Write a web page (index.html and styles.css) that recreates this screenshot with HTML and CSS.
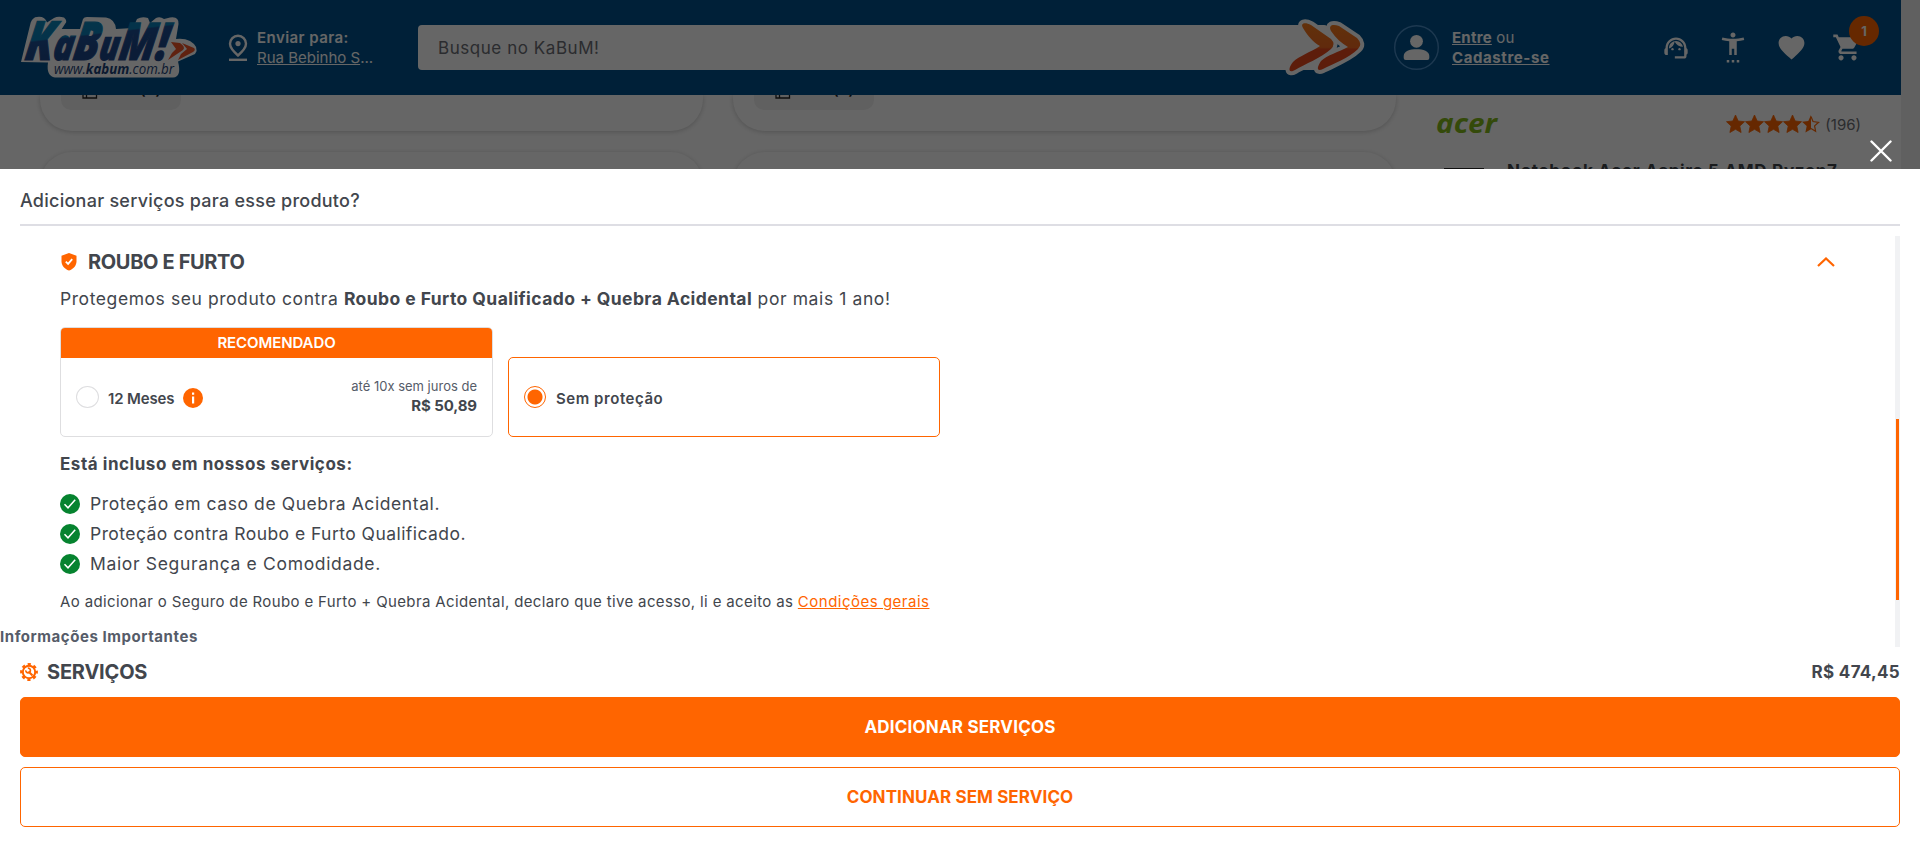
FILE: index.html
```html
<!DOCTYPE html>
<html lang="pt-BR">
<head>
<meta charset="utf-8">
<title>KaBuM! - Serviços</title>
<link rel="stylesheet" href="styles.css">
</head>
<body>
<div class="page">
  <header class="header">
    <svg class="logo" viewBox="0 0 180 64" width="180" height="64">
      <defs>
        <linearGradient id="brand" gradientUnits="userSpaceOnUse" x1="0" y1="-42" x2="4" y2="0">
          <stop offset="0" stop-color="#0b86b8"/><stop offset=".56" stop-color="#0b80b8"/>
          <stop offset=".6" stop-color="#1c4f95"/><stop offset="1" stop-color="#1c4789"/>
        </linearGradient>
      </defs>
      <path d="M1 47L10.700 7.500Q13 2 17 2Q25 1 27 7.500L34 3Q38 1 44 2.500Q48 6 45 9L41.700 14L60 14L63 4Q64 2 67 2L86 2.500Q95 4 96 14L113 13L117 4Q122 1 128 3L130 8L136 3Q140 1 144 4L150 2.500Q159 1 158.500 9L156 24Q164 23 170 26Q180 32 175 39L158 46.500Q162 62 153 62.500L35 62.500Q26 61 28 47.500Z" fill="#fff"/>
      <text class="logo-word" transform="translate(4 44.500) skewX(-9) scale(.8 1)" x="0" y="0" fill="url(#brand)" stroke="url(#brand)" stroke-width="1.200" textLength="178" lengthAdjust="spacingAndGlyphs"><tspan font-size="54">K</tspan><tspan font-size="43">a</tspan><tspan font-size="53">B</tspan><tspan font-size="41">u</tspan><tspan font-size="52">M!</tspan></text>
      <path d="M151 27L160 28Q166 32 163 35L148 45L152 38L156 34Z M162 28L174 33Q176 35 173 37L158 45L161 39L167 34Z" fill="#f0562a"/>
      <text class="logo-url" x="34" y="58.500" font-size="14.500" textLength="120" lengthAdjust="spacingAndGlyphs">www.<tspan font-weight="700">kabum</tspan>.com.br</text>
    </svg>
    <div class="address">
      <svg width="20" height="28" viewBox="0 0 20 28" fill="none" stroke="#fff" stroke-width="2.4">
        <path d="M10 21.5C6 18 2 14 2 9.800a8 8 0 0 1 16 0c0 4.200-4 8.200-8 11.700z"/>
        <circle cx="10" cy="9.600" r="2.600" fill="#fff" stroke="none"/><path d="M1 25.800h18"/>
      </svg>
      <div class="address-text"><b class="t-env">Enviar para:</b><span class="t-rua"><u>Rua Bebinho S</u>...</span></div>
    </div>
    <div class="search">
      <span class="t-busque">Busque no KaBuM!</span>
      <svg class="search-go" width="84" height="62" viewBox="0 0 84 62">
        <defs><linearGradient id="fire" x1="0" y1="0" x2="0" y2="1"><stop offset="0" stop-color="#f47a1c"/><stop offset=".5" stop-color="#f26a20"/><stop offset=".54" stop-color="#e8491c"/><stop offset="1" stop-color="#e8491c"/></linearGradient></defs>
        <g fill="#fff" stroke="#fff" stroke-width="8" stroke-linejoin="round">
          <path d="M20 10C17 5 22 4 28 7L48 21Q53 26 48 31C38 40 22 46 12 52C5 56 5 50 10 44C16 38 28 34 37 28C30 24 25 18 20 10Z"/>
          <path d="M48 13C45 7 50 6 56 8L74 20Q80 26 75 31C66 40 50 46 40 51C33 54 34 49 38 43C44 37 56 34 65 29C58 25 53 20 48 13Z"/>
        </g>
        <g fill="url(#fire)">
          <path d="M20 10C17 5 22 4 28 7L48 21Q53 26 48 31C38 40 22 46 12 52C5 56 5 50 10 44C16 38 28 34 37 28C30 24 25 18 20 10Z"/>
          <path d="M48 13C45 7 50 6 56 8L74 20Q80 26 75 31C66 40 50 46 40 51C33 54 34 49 38 43C44 37 56 34 65 29C58 25 53 20 48 13Z"/>
        </g>
      </svg>
    </div>
    <div class="account">
      <svg width="45" height="45" viewBox="0 0 45 45"><circle cx="22.500" cy="22.500" r="21.800" fill="none" stroke="#4a8dc8" stroke-width="1.400"/><circle cx="22.500" cy="16.300" r="6.400" fill="#fff"/><path d="M9.700 33v-2c0-5 6-6.800 12.800-6.800s12.800 1.800 12.800 6.800v2q0 2-2 2H11.700q-2 0-2-2z" fill="#fff"/></svg>
      <div class="account-text"><span class="t-entre"><b><u>Entre</u></b> ou</span><b class="t-cad"><u>Cadastre-se</u></b></div>
    </div>
    <nav class="tools">
      <svg width="28" height="28" viewBox="0 0 24 24" fill="#fff"><path d="M21 12.220C21 6.730 16.740 3 12 3c-4.690 0-9 3.650-9 9.280-.6.340-1 .98-1 1.720v2c0 1.100.9 2 2 2h1v-6.100c0-3.870 3.130-7 7-7s7 3.130 7 7V19h-8v2h8c1.100 0 2-.9 2-2v-1.220c.59-.31 1-.92 1-1.640v-2.300c0-.7-.41-1.310-1-1.620z"/><circle cx="9" cy="13" r="1"/><circle cx="15" cy="13" r="1"/><path d="M18 11.030A6.040 6.040 0 0 0 12.050 6c-3.030 0-6.290 2.510-6.030 6.450a8.075 8.075 0 0 0 4.860-5.890c1.310 2.630 4 4.440 7.120 4.470z"/></svg>
      <svg width="30" height="31" viewBox="0 0 24 24" fill="#fff"><path d="M20.500 4c-2.610.7-5.670 1-8.500 1s-5.890-.3-8.500-1L3 6c1.860.5 4 .83 6 1v11h2v-5h2v5h2V7c2-.17 4.140-.5 6-1l-.5-2zM12 4c1.100 0 2-.9 2-2s-.9-2-2-2-2 .9-2 2 .9 2 2 2zM7 24h2v-2H7v2zm4 0h2v-2h-2v2zm4 0h2v-2h-2v2z"/></svg>
      <svg width="31" height="31" viewBox="0 0 24 24" fill="#fff"><path d="M12 21.350l-1.450-1.320C5.400 15.360 2 12.280 2 8.500 2 5.420 4.420 3 7.500 3c1.740 0 3.410.81 4.500 2.090C13.090 3.810 14.760 3 16.500 3 19.580 3 22 5.420 22 8.500c0 3.780-3.400 6.860-8.550 11.540L12 21.350z"/></svg>
      <div class="cart">
        <svg width="31" height="31" viewBox="0 0 24 24" fill="#fff"><path d="M7 18c-1.100 0-1.990.9-1.990 2S5.900 22 7 22s2-.9 2-2-.9-2-2-2zM1 2v2h2l3.600 7.590-1.350 2.450c-.16.280-.25.610-.25.960 0 1.100.9 2 2 2h12v-2H7.420c-.14 0-.25-.11-.25-.25l.03-.12.900-1.630h7.450c.75 0 1.410-.41 1.750-1.030l3.580-6.490A1 1 0 0 0 20 4H5.210l-.94-2H1zm16 16c-1.100 0-1.990.9-1.990 2s.89 2 1.990 2 2-.9 2-2-.9-2-2-2z"/></svg>
        <span class="badge">1</span>
      </div>
    </nav>
  </header>
  <main class="content">
    <section class="reviews">
      <article class="review review-end"><div class="useful"><svg width="16" height="16" viewBox="0 0 16 16" fill="none" stroke="#222" stroke-width="1.300"><path d="M1 7h3.500v8H1zM4.500 8l3-6c2 0 2.500 1 2 4h5v9h-11"/></svg><span class="count">(0)</span></div></article>
      <article class="review review-end"><div class="useful"><svg width="16" height="16" viewBox="0 0 16 16" fill="none" stroke="#222" stroke-width="1.300"><path d="M1 7h3.500v8H1zM4.500 8l3-6c2 0 2.500 1 2 4h5v9h-11"/></svg><span class="count">(0)</span></div></article>
      <article class="review"></article>
      <article class="review"></article>
    </section>
    <aside class="product">
      <div class="product-top">
        <svg class="acer-logo" width="64" height="20" viewBox="0 0 64 20"><text class="acer" x="0" y="17.500" textLength="61" lengthAdjust="spacingAndGlyphs">acer</text></svg>
        <div class="rating">
          <svg width="95" height="19" viewBox="0 0 95 19" fill="#ff6500"><defs><path id="star" d="M9.500 0l2.700 6 6.300.7-4.700 4.400 1.300 6.400-5.600-3.200-5.600 3.200 1.300-6.400L.5 6.700 6.800 6z" stroke="#ff6500" stroke-width=".8" stroke-linejoin="round"/></defs><use href="#star"/><use href="#star" x="19"/><use href="#star" x="38"/><use href="#star" x="57"/><path transform="translate(75.500)" d="M9.500 0v14.300l-5.600 3.200 1.300-6.400L.5 6.700 6.800 6z"/><path transform="translate(75.500)" d="M9.500 1.500l2 5 5.600.8-4 3.600 1 5.300-4.600-2.700" fill="none" stroke="#ff6500" stroke-width="1.200"/></svg>
          <span class="t-196">(196)</span>
        </div>
      </div>
      <div class="product-name"><span class="thumb"></span><b class="t-note">Notebook Acer Aspire 5 AMD Ryzen7-</b></div>
    </aside>
  </main>
</div>
<div class="overlay">
  <svg class="close" width="22" height="22" viewBox="0 0 22 22" stroke="#fff" stroke-width="2.400" stroke-linecap="round"><path d="M1.500 1.500l19 19M20.500 1.500l-19 19"/></svg>
</div>
<div class="modal" role="dialog">
  <h1 class="modal-title"><span class="t-add">Adicionar serviços para esse produto?</span></h1>
  <div class="scroll-area">
    <div class="scroll-content">
      <section class="service">
        <div class="service-head">
          <svg width="16" height="18" viewBox="0 0 16 18"><path d="M8 0l7.500 2.700v5.500c0 4.200-3 7.800-7.500 9.300C3.500 16 .5 12.400.5 8.200V2.700z" fill="#ff6500"/><path d="M4.800 8.600l2.300 2.300 4.100-4.700" fill="none" stroke="#fff" stroke-width="1.800"/></svg>
          <h2 class="t-roubo">ROUBO E FURTO</h2>
          <svg class="chevron" width="18" height="10" viewBox="0 0 18 10" fill="none" stroke="#ff6500" stroke-width="2.200"><path d="M1 9l8-7.500L17 9"/></svg>
        </div>
        <p class="lead"><span class="t-prot">Protegemos seu produto contra </span><b class="t-qual">Roubo e Furto Qualificado + Quebra Acidental</b><span class="t-mais"> por mais 1 ano!</span></p>
        <div class="plans">
          <div class="plan">
            <div class="plan-flag"><span class="t-reco">RECOMENDADO</span></div>
            <div class="plan-body">
              <i class="radio"></i><b class="t-12">12 Meses</b>
              <svg class="info" width="20" height="20" viewBox="0 0 20 20"><circle cx="10" cy="10" r="10" fill="#ff6500"/><path d="M9 8.500h2.200v7H9zM9 4.500h2.200v2.200H9z" fill="#fff"/></svg>
              <div class="price"><span class="t-ate">até 10x sem juros de</span><b class="t-50">R$ 50,89</b></div>
            </div>
          </div>
          <div class="plan plan-selected">
            <div class="plan-body"><i class="radio radio-on"></i><b class="t-sem">Sem proteção</b></div>
          </div>
        </div>
        <h3 class="included"><span class="t-esta">Está incluso em nossos serviços:</span></h3>
        <ul class="checks">
          <li><svg width="20" height="20" viewBox="0 0 20 20"><circle cx="10" cy="10" r="10" fill="#06832f"/><path d="M4.500 10.200l3.500 3.600 7.200-8" fill="none" stroke="#fff" stroke-width="1.500"/></svg><span class="t-c1">Proteção em caso de Quebra Acidental.</span></li>
          <li><svg width="20" height="20" viewBox="0 0 20 20"><circle cx="10" cy="10" r="10" fill="#06832f"/><path d="M4.500 10.200l3.500 3.600 7.200-8" fill="none" stroke="#fff" stroke-width="1.500"/></svg><span class="t-c2">Proteção contra Roubo e Furto Qualificado.</span></li>
          <li><svg width="20" height="20" viewBox="0 0 20 20"><circle cx="10" cy="10" r="10" fill="#06832f"/><path d="M4.500 10.200l3.500 3.600 7.200-8" fill="none" stroke="#fff" stroke-width="1.500"/></svg><span class="t-c3">Maior Segurança e Comodidade.</span></li>
        </ul>
        <p class="terms"><span class="t-ao">Ao adicionar o Seguro de Roubo e Furto + Quebra Acidental, declaro que tive acesso, li e aceito as </span><u class="t-cond">Condições gerais</u></p>
      </section>
      <h4 class="important"><span class="t-info">Informações Importantes</span></h4>
    </div>
    <div class="track"><div class="track-thumb"></div></div>
  </div>
  <footer class="modal-foot">
    <div class="total">
      <svg width="18" height="18" viewBox="0 0 18 18" fill="none" stroke="#ff6500"><circle cx="9" cy="9" r="6.200" stroke-width="2"/><circle cx="9" cy="9" r="7.700" stroke-width="2.400" stroke-dasharray="3.200 2.847" stroke-dashoffset="1.600"/><path d="M8.500 8.500l4 4" stroke-width="2.200"/><path d="M5.800 7.400a2.300 2.300 0 1 0 2-2.200" stroke-width="1.700"/></svg>
      <h2 class="t-serv">SERVIÇOS</h2><b class="t-474">R$ 474,45</b>
    </div>
    <button class="btn btn-full"><span class="t-adic">ADICIONAR SERVIÇOS</span></button>
    <button class="btn"><span class="t-cont">CONTINUAR SEM SERVIÇO</span></button>
  </footer>
</div>
</body>
</html>
```
FILE: styles.css
```css
* { box-sizing: border-box; margin: 0; padding: 0; }
body { font-family: Inter, "Liberation Sans", sans-serif; color: #42464d; background: #f0f0f0; height: 847px; overflow: hidden; }
span, b, u { white-space: nowrap; }
b { font-weight: 600; }
.page { width: 1901px; height: 847px; overflow: hidden; background: #fff; }

.header { display: flex; align-items: center; height: 95px; background: #00528c; color: #fff; position: relative; }
.logo { margin-left: 20px; margin-top: -1px; overflow: visible; }
.logo-word { font-family: "Open Sans", sans-serif; font-style: italic; font-weight: 800; }
.logo-url { font-family: "Open Sans", sans-serif; font-style: italic; fill: #1c4378; }
.address { display: flex; gap: 9px; align-items: center; width: 160px; margin-left: 28px; font-size: 15px; }
.address-text, .account-text { display: flex; flex-direction: column; line-height: 20px; }
.search { display: flex; align-items: center; width: 910px; height: 45px; margin-left: 30px; padding-left: 20px; background: #fff; border-radius: 4px; color: #6b6e75; font-size: 17px; position: relative; }
.search-go { position: absolute; left: 865px; top: -7px; }
.account { display: flex; align-items: center; gap: 13px; margin-left: 66px; width: 230px; font-size: 15px; }
.account b { font-weight: 700; }
.tools { display: flex; align-items: center; margin-left: 38px; gap: 28px; }
.cart { position: relative; height: 31px; margin-left: -3px; }
.badge { position: absolute; left: 17px; top: -16px; width: 30px; height: 30px; border-radius: 50%; background: #ff6500; font-size: 13px; font-weight: 700; line-height: 30px; text-align: center; }

.content { display: flex; }
.reviews { display: grid; grid-template-columns: 663px 663px; gap: 21px 30px; margin-left: 40px; }
.review { height: 100px; border-radius: 32px; box-shadow: 0 1px 5px rgba(0, 0, 0, .2); }
.review-end { height: 36px; border-radius: 0 0 32px 32px; padding-left: 21px; }
.useful { display: flex; align-items: flex-end; gap: 42px; width: 120px; height: 15px; padding: 0 0 11px 21px; background: #f0f0f0; border-radius: 0 0 10px 10px; font-size: 15px; line-height: 19px; color: #222; overflow: hidden; }
.count { font-weight: 600; line-height: 18px; }
.product { width: 425px; margin-left: 40px; padding-top: 20px; }
.product-top { display: flex; justify-content: space-between; align-items: flex-start; height: 46px; }
.acer-logo { overflow: visible; }
.acer { font-family: "Open Sans", sans-serif; font-size: 27px; font-style: italic; font-weight: 700; fill: #83b81a; }
.rating { display: flex; gap: 4px; align-items: center; color: #6b6e75; font-size: 15px; }
.rating svg { margin-left: -1px; }
.product-name { display: flex; font-size: 17px; line-height: 20px; }
.thumb { width: 40px; height: 20px; margin: 7px 23px 0 8px; background: #2a2a2a; }

.overlay { position: absolute; inset: 0; background: rgba(0, 0, 0, .6); }
.close { position: absolute; left: 1870px; top: 140px; }

.modal { position: absolute; left: 0; top: 169px; width: 1920px; height: 678px; background: #fff; overflow: hidden; }
.modal-title { height: 57px; margin: 0 20px; padding-top: 20px; border-bottom: 2px solid #dedee4; font-size: 18px; font-weight: 550; line-height: 24px; }
.scroll-area { display: flex; margin-top: 10px; height: 411px; }
.scroll-content { width: 1895px; }
.track { width: 5px; background: #f1f2f4; padding: 183px 1px 0; }
.track-thumb { height: 181px; background: #ff6500; }
.service { padding: 14px 60px 0; }
.service-head { display: flex; align-items: center; height: 24px; }
.service-head svg { margin-left: 1px; }
h2 { font-size: 20px; font-weight: 700; }
.service-head h2 { margin-left: 11px; }
.service-head .chevron { margin-left: auto; }
.lead { margin-top: 13px; height: 24px; line-height: 24px; font-size: 17.5px; }
.lead span, .lead b { white-space: pre; }
.lead b { font-weight: 700; }
.plans { display: flex; gap: 15px; align-items: flex-end; margin-top: 16px; height: 110px; }
.plan { width: 433px; border: 1px solid #dedee0; border-radius: 5px; overflow: hidden; }
.plan-selected { width: 432px; border-color: #ff6500; }
.plan-flag { height: 30px; background: #ff6500; color: #fff; font-size: 15px; font-weight: 600; line-height: 30px; text-align: center; }
.plan-body { display: flex; align-items: center; height: 78px; padding: 0 15px; font-size: 15px; }
.plan-body > b { padding-top: 2px; }
.radio { width: 23px; height: 22px; border: 1px solid #dedee0; border-radius: 50%; margin-right: 9px; }
.radio-on { width: 22px; margin-right: 10px; border-color: #ff6500; background: radial-gradient(circle, #ff6500 7px, #fff 8px); }
.info { margin-left: 9px; margin-top: 2px; }
.price { display: flex; flex-direction: column; align-items: flex-end; margin-left: auto; margin-top: -2px; font-size: 13px; line-height: 19px; color: #565c69; }
.price b { font-size: 15px; color: #42464d; font-weight: 700; }
.included { margin-top: 15px; font-size: 17px; line-height: 24px; font-weight: 700; }
.checks { list-style: none; margin-top: 13px; }
.checks li { display: flex; align-items: center; gap: 10px; height: 30px; font-size: 17.5px; }
.checks span { margin-top: -1px; }
.terms { margin-top: 13px; font-size: 15px; line-height: 20px; }
.terms span { white-space: pre; }
.terms u { color: #ff6500; }
.important { margin-top: 15px; font-size: 15px; line-height: 20px; font-weight: 700; color: #565c69; }
.modal-foot { padding: 0 20px; }
.total { display: flex; align-items: center; height: 50px; gap: 9px; }
.total b { margin-left: auto; font-size: 17px; font-weight: 700; }
.btn { display: block; width: 100%; height: 60px; margin-bottom: 10px; border: 1px solid #ff6500; border-radius: 5px; background: #fff; color: #ff6500; font: 700 17px Inter, sans-serif; }
.btn-full { background: #ff6500; color: #fff; }

/* Tracking per label */
.t-env { letter-spacing: .45px; }
.t-busque { letter-spacing: .55px; }
.t-entre { letter-spacing: .25px; }
.t-cad { letter-spacing: .6px; }
.t-note { font-weight: 700; letter-spacing: .7px; }
.t-add { letter-spacing: .25px; }
.t-roubo { letter-spacing: -.35px; }
.t-prot { letter-spacing: .57px; }
.t-qual { letter-spacing: .42px; }
.t-mais { letter-spacing: .6px; }
.t-reco { letter-spacing: -.1px; }
.t-12 { letter-spacing: -.15px; }
.t-sem { letter-spacing: .55px; }
.t-50 { letter-spacing: -.1px; }
.t-esta { letter-spacing: .54px; }
.t-c1 { letter-spacing: .58px; }
.t-c2 { letter-spacing: .45px; }
.t-c3 { letter-spacing: .66px; }
.t-ao { letter-spacing: .36px; }
.t-cond { letter-spacing: .5px; }
.t-info { letter-spacing: .55px; }
.t-serv { letter-spacing: -.2px; }
.t-474 { letter-spacing: .3px; }
.t-adic { letter-spacing: .2px; }
.t-cont { letter-spacing: .1px; }
```
